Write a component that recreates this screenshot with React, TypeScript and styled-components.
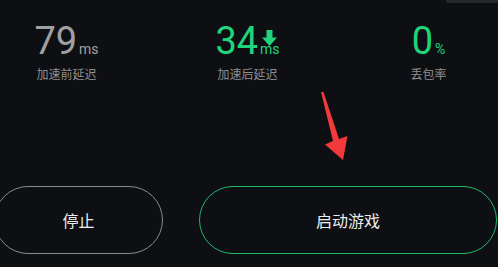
import React from "react";
import styled, { createGlobalStyle } from "styled-components";

const Global = createGlobalStyle`
  html, body { margin: 0; padding: 0; background: #0e0f13; }
  body { width: 498px; height: 267px; overflow: hidden; font-family: Roboto, "Noto Sans CJK SC", sans-serif; }
`;

const Page = styled.div`
  position: relative;
  width: 498px;
  height: 267px;
  background: #0e0f13;
  overflow: hidden;
  display: flex;
  flex-direction: column;
`;

const TopStrip = styled.div`
  align-self: flex-end;
  width: 52px;
  height: 3px;
  background: #24262b;
  border-bottom-left-radius: 2px;
`;

const Stats = styled.div`
  display: flex;
  margin-left: -24px;
  padding-top: 17px;
`;

const Stat = styled.div`
  width: 181px;
  flex-shrink: 0;
  display: flex;
  flex-direction: column;
  align-items: center;
`;

const Value = styled.div<{ $green?: boolean }>`
  display: flex;
  align-items: baseline;
  color: ${(p) => (p.$green ? "#1fd47a" : "#a0a0a2")};
  font-family: Roboto, sans-serif;
`;

const Num = styled.span`
  font-size: 38px;
  line-height: 42px;
  font-weight: 400;
`;

const Unit = styled.span`
  position: relative;
  font-size: 14px;
  margin-left: 2px;
`;

const DownIcon = styled.svg`
  position: absolute;
  left: 2px;
  top: -11px;
`;

const Label = styled.div`
  margin-top: 5px;
  font-family: "Noto Sans CJK SC", sans-serif;
  font-size: 12px;
  line-height: 14px;
  color: #8f8f92;
`;

const Buttons = styled.div`
  display: flex;
  gap: 36px;
  margin-top: auto;
  margin-bottom: 13px;
  margin-left: -6px;
`;

const Pill = styled.button<{ $primary?: boolean; $w: number }>`
  flex-shrink: 0;
  width: ${(p) => p.$w}px;
  height: 68px;
  border-radius: 34px;
  background: transparent;
  border: 1.5px solid ${(p) => (p.$primary ? "#20b96a" : "#8a8a8d")};
  color: #ececec;
  font-family: "Noto Sans CJK SC", sans-serif;
  font-size: 16px;
  padding: 0;
  display: flex;
  align-items: center;
  justify-content: center;
`;

const Pointer = styled.svg`
  position: absolute;
  left: 0;
  top: 0;
  pointer-events: none;
`;

export default function App() {
  return (
    <Page>
      <Global />
      <TopStrip />
      <Stats>
        <Stat>
          <Value>
            <Num>79</Num>
            <Unit>ms</Unit>
          </Value>
          <Label>加速前延迟</Label>
        </Stat>
        <Stat>
          <Value $green>
            <Num>34</Num>
            <Unit>
              <DownIcon width="15" height="16" viewBox="0 0 15 16">
                <path d="M4.5 0 H10.5 V7.5 H15 L7.5 16 L0 7.5 H4.5 Z" fill="#1fd47a" />
              </DownIcon>
              ms
            </Unit>
          </Value>
          <Label>加速后延迟</Label>
        </Stat>
        <Stat>
          <Value $green>
            <Num>0</Num>
            <Unit>%</Unit>
          </Value>
          <Label>丢包率</Label>
        </Stat>
      </Stats>
      <Buttons>
        <Pill $w={169}>停止</Pill>
        <Pill $w={298} $primary>启动游戏</Pill>
      </Buttons>
      <Pointer width="498" height="267" viewBox="0 0 498 267">
        <polygon
          points="321,92 323.5,92 339,139 347.5,136 343,160 325,144.5 333,141"
          fill="#f23a3a"
        />
      </Pointer>
    </Page>
  );
}
